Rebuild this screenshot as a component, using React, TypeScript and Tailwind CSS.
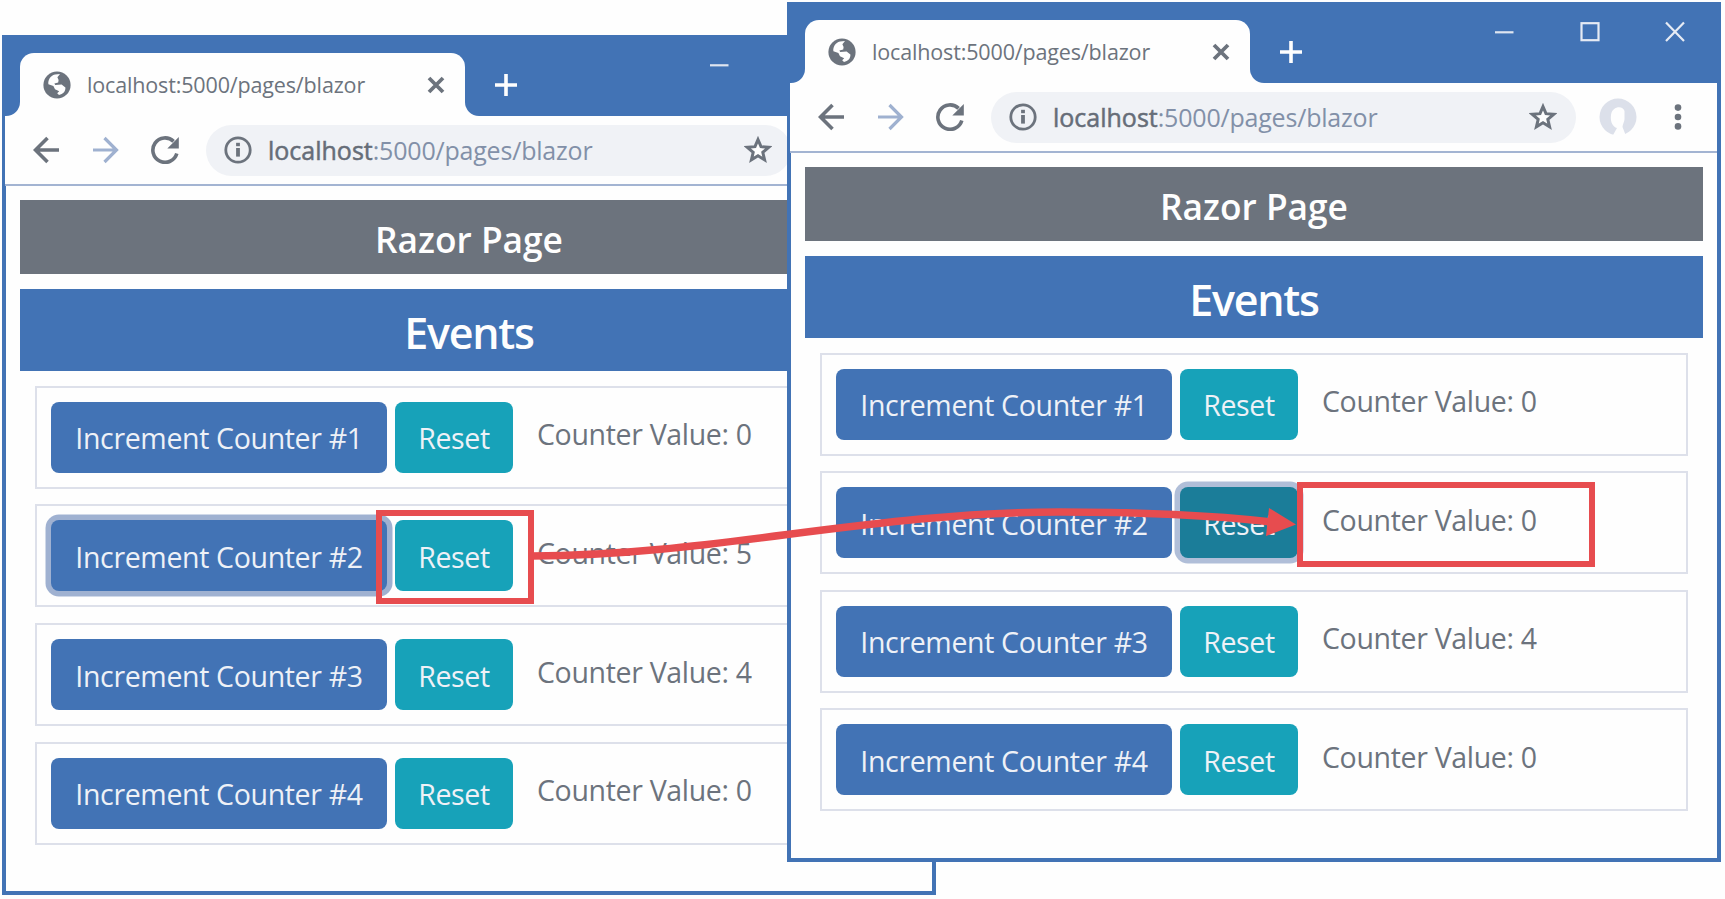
type Row = { label: string; value: number; focus?: 'increment' | 'reset' };

function GlobeIcon() {
  return (
    <svg width="28" height="28" viewBox="0 0 28 28" className="shrink-0">
      <circle cx="14" cy="14" r="13.6" fill="#6c737d" />
      <path
        d="M5.4 13.2C4.8 9.4 7.2 4.8 12 3.6L17 3L14.4 6.2L15.6 9L15.2 11.4L11.4 12.4L12.2 14L18.6 13.4L22.4 16.6C22.6 20.6 20 23.2 16 24L14.2 22.2L16.2 20.2L12 18.2L10.4 15Z"
        fill="#fefefe"
      />
    </svg>
  );
}

function TabStrip() {
  return (
    <div className="flex h-[81px] shrink-0 items-start bg-[#4273b5] pt-[18px]">
      <div className="h-[63px] w-[18px] shrink-0 bg-[#fefefe]">
        <div className="h-full w-full rounded-br-[14px] bg-[#4273b5]" />
      </div>
      <div className="flex h-[63px] w-[445px] shrink-0 items-center rounded-t-[14px] bg-[#fefefe] pl-[23px]">
        <GlobeIcon />
        <span className="ml-[16px] w-[330px] whitespace-nowrap text-[21.5px] leading-7 tracking-[-0.15px] text-[#6c737d]">
          localhost:5000/pages/blazor
        </span>
        <svg width="18" height="18" viewBox="0 0 18 18" className="ml-[10px] shrink-0">
          <path d="M2 2L16 16M16 2L2 16" stroke="#6c737d" strokeWidth="3.8" />
        </svg>
      </div>
      <div className="h-[63px] w-[16px] shrink-0 bg-[#fefefe]">
        <div className="h-full w-full rounded-bl-[14px] bg-[#4273b5]" />
      </div>
      <svg width="22" height="22" viewBox="0 0 22 22" className="ml-[14px] mt-[21px] shrink-0">
        <path d="M11 0V22M0 11H22" stroke="#fefefe" strokeWidth="3.6" />
      </svg>
      <div className="ml-[192px] flex items-center gap-[65.5px]">
        <svg width="20" height="20" viewBox="0 0 20 20">
          <path d="M1 12.3H19.5" stroke="#dfe5f0" strokeWidth="2.2" />
        </svg>
        <svg width="20" height="20" viewBox="0 0 20 20" className="overflow-visible">
          <rect x="1.5" y="3.2" width="17" height="17" fill="none" stroke="#e6ebf4" strokeWidth="2.2" />
        </svg>
        <svg width="20" height="20" viewBox="0 0 20 20" className="overflow-visible">
          <path d="M1 2.5L19 21M19 2.5L1 21" stroke="#e6ebf4" strokeWidth="2.2" />
        </svg>
      </div>
    </div>
  );
}

function Toolbar() {
  return (
    <div className="flex h-[70px] shrink-0 items-center border-b-2 border-[#a3b4d2] bg-[#fefefe] pl-[28px]">
      <svg width="27" height="28" viewBox="0 0 27 28" className="shrink-0">
        <path d="M26 14H3M14.5 2L2.5 14L14.5 26" fill="none" stroke="#6c737d" strokeWidth="3.6" />
      </svg>
      <svg width="27" height="28" viewBox="0 0 27 28" className="ml-[32px] shrink-0">
        <path d="M1 14H24M12.5 2L24.5 14L12.5 26" fill="none" stroke="#9fb1d0" strokeWidth="3.2" />
      </svg>
      <svg width="28" height="28" viewBox="0 0 28 28" className="ml-[32px] shrink-0">
        <path d="M25.8 17.5A12.2 12.2 0 1 1 22.6 5.4" fill="none" stroke="#6c737d" strokeWidth="3.6" />
        <path d="M27.8 1V12.5H16.3Z" fill="#6c737d" />
      </svg>
      <div className="ml-[27px] flex h-[51px] w-[585px] shrink-0 items-center rounded-full bg-[#f0f2f6] pl-[18px]">
        <svg width="28" height="28" viewBox="0 0 28 28" className="shrink-0">
          <circle cx="14" cy="14" r="12.2" fill="none" stroke="#6c737d" strokeWidth="2.8" />
          <rect x="12.1" y="12" width="3.8" height="8.6" fill="#6c737d" />
          <rect x="12.1" y="6.8" width="3.8" height="3.4" fill="#6c737d" />
        </svg>
        <span className="ml-[16px] w-[460px] whitespace-nowrap text-[25px] leading-8 tracking-[-0.2px] text-[#8290a8]">
          <span className="tracking-[0px] text-[#666d78] [-webkit-text-stroke:0.5px_#666d78]">localhost</span>
          :5000/pages/blazor
        </span>
        <svg width="28" height="28" viewBox="0 0 28 28" className="ml-[16px] shrink-0">
          <path
            d="M14 3.6L17 10.7L24.7 11.3L18.8 16.3L20.6 23.8L14 19.8L7.4 23.8L9.2 16.3L3.3 11.3L11 10.7Z"
            fill="#fefefe"
            stroke="#6c737d"
            strokeWidth="3"
          />
        </svg>
      </div>
      <svg width="38" height="38" viewBox="0 0 38 38" className="ml-[23px] shrink-0">
        <circle cx="19" cy="19" r="18.5" fill="#dce0ea" />
        <path
          d="M12 17C13 8 24 7 25.5 13V21C25.5 24 23.5 26 23.5 29L27 38H13.5L18 30C14 29 11 24 12 17Z"
          fill="#fefefe"
        />
      </svg>
      <svg width="8" height="28" viewBox="0 0 8 28" className="ml-[37px] shrink-0">
        <circle cx="4" cy="4.6" r="3.3" fill="#6c737d" />
        <circle cx="4" cy="14" r="3.3" fill="#6c737d" />
        <circle cx="4" cy="23.4" r="3.3" fill="#6c737d" />
      </svg>
    </div>
  );
}

function CounterRow({ label, value, focus }: Row) {
  const increment = focus === 'increment' ? 'ring-[5.5px] ring-[#9fb1d1]' : '';
  const reset = focus === 'reset' ? 'bg-[#1b7d99] ring-[5.5px] ring-[#b0bed8]' : 'bg-[#17a2b9]';
  return (
    <div className="flex h-[103px] shrink-0 items-center border-2 border-[#dde0ea] pl-[14px]">
      <button
        className={`flex h-[71px] w-[336px] shrink-0 items-center justify-center whitespace-nowrap rounded-[8px] bg-[#4273b5] pt-[2px] text-[28.5px] leading-10 tracking-[-0.34px] text-[#eef1f7] ${increment}`}
      >
        {label}
      </button>
      <button
        className={`ml-[8px] flex h-[71px] w-[118px] shrink-0 items-center justify-center whitespace-nowrap rounded-[8px] pt-[2px] text-[28.5px] leading-10 tracking-[-0.4px] text-[#eef1f7] ${reset}`}
      >
        Reset
      </button>
      <span className="mb-[6px] ml-[24px] whitespace-nowrap text-[28.5px] leading-10 tracking-[-0.33px] text-[#6c737d]">
        Counter Value: {value}
      </span>
    </div>
  );
}

function BrowserWindow({ rows }: { rows: Row[] }) {
  return (
    <div className="flex h-[860px] w-[934px] flex-col bg-[#4273b5] pb-[4px]">
      <TabStrip />
      <div className="flex grow flex-col px-[4px]">
        <div className="flex grow flex-col bg-[#fefefe]">
          <div className="-ml-px">
            <Toolbar />
          </div>
          <div className="flex flex-col px-[14px] pt-[14px]">
            <h1 className="flex h-[74px] items-center justify-center bg-[#6c737d] pt-[4px] text-[35.3px] leading-10 font-semibold text-[#fefefe]">
              Razor Page
            </h1>
            <h2 className="mt-[14.5px] flex h-[82px] items-center justify-center bg-[#4273b5] pt-[7px] text-[43px] leading-[56px] font-semibold tracking-[-1.25px] text-[#fefefe]">
              Events
            </h2>
            <div className="mt-[15px] flex flex-col gap-[15.6px] px-[15px]">
              {rows.map((row) => (
                <CounterRow key={row.label} {...row} />
              ))}
            </div>
          </div>
        </div>
      </div>
    </div>
  );
}

const before: Row[] = [
  { label: 'Increment Counter #1', value: 0 },
  { label: 'Increment Counter #2', value: 5, focus: 'increment' },
  { label: 'Increment Counter #3', value: 4 },
  { label: 'Increment Counter #4', value: 0 },
];

const after: Row[] = [
  { label: 'Increment Counter #1', value: 0 },
  { label: 'Increment Counter #2', value: 0, focus: 'reset' },
  { label: 'Increment Counter #3', value: 4 },
  { label: 'Increment Counter #4', value: 0 },
];

export default function App() {
  return (
    <div className="relative h-[899px] w-[1725px] overflow-hidden bg-[#fefefe] font-['Open_Sans','Noto_Sans',sans-serif]">
      <div className="absolute left-[2px] top-[35.4px]">
        <BrowserWindow rows={before} />
      </div>
      <div className="absolute left-[787px] top-[2px]">
        <BrowserWindow rows={after} />
      </div>
      <div className="absolute left-[376px] top-[510px] h-[94px] w-[158px] border-[6px] border-[#e74c4f]" />
      <div className="absolute left-[1297px] top-[482px] h-[85px] w-[298px] border-[6px] border-[#e74c4f]" />
      <svg className="absolute left-0 top-0" width="1725" height="899" viewBox="0 0 1725 899">
        <path
          d="M532 556C710 556 870 512 1060 512C1130 512 1200 514 1272 522"
          fill="none"
          stroke="#e74c4f"
          strokeWidth="7.5"
        />
        <path d="M1269 508L1296 524.5L1266 536Z" fill="#e74c4f" />
      </svg>
    </div>
  );
}
